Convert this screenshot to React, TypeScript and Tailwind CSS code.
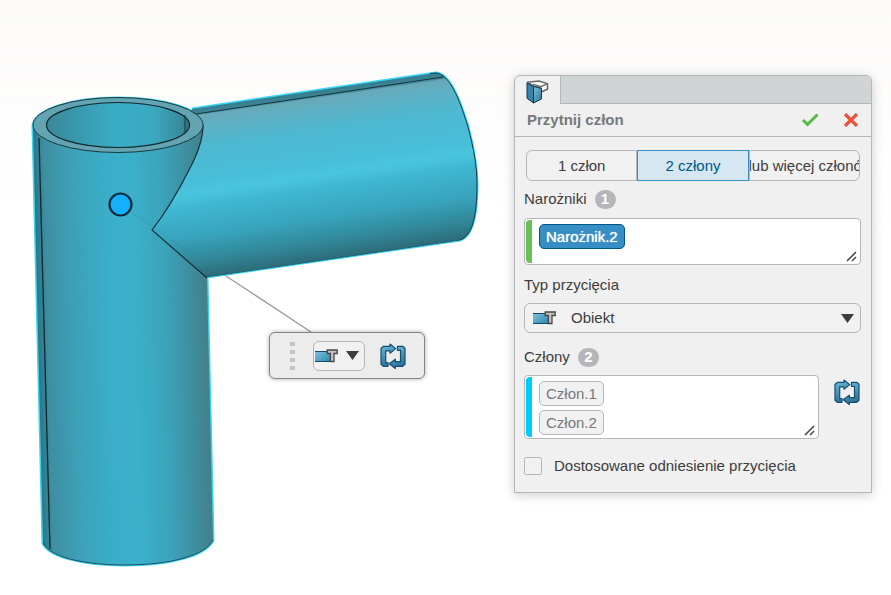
import { useState } from "react";

const corners = ["Narożnik.2"];
const members = ["Człon.1", "Człon.2"];

function TrimIcon() {
  return (
    <svg width="23" height="14" viewBox="0 0 23 14" aria-hidden="true">
      <defs>
        <linearGradient id="trim-fill" x1="0" y1="0" x2="1" y2="1">
          <stop offset="0" stopColor="#7cc3e2" />
          <stop offset="1" stopColor="#2f86ad" />
        </linearGradient>
      </defs>
      <rect x="0" y="2.5" width="15" height="10.5" fill="url(#trim-fill)" />
      <path d="M0 2.500h13M0 12.500h15" stroke="#0f4a68" />
      <path
        d="M12.200 1h10v3.500h-3.200v8h-3.600V4.500h-3.200z"
        fill="#c4c2c2"
        stroke="#4b4546"
        strokeWidth="1.300"
      />
    </svg>
  );
}

function SwapIcon() {
  return (
    <svg width="26" height="26" viewBox="0 0 26 26" aria-hidden="true">
      <defs>
        <linearGradient id="swap-fill" x1="0" y1="0" x2="0.3" y2="1">
          <stop offset="0" stopColor="#6fbfe2" />
          <stop offset="1" stopColor="#2d7298" />
        </linearGradient>
      </defs>
      <g
        fill="url(#swap-fill)"
        stroke="#14506e"
        strokeWidth="1.200"
        strokeLinejoin="round"
      >
        <path d="M3.500 3.300H10V1L15.800 5.600L10 10.200V7.900H5.700V19.500H8V23.300H3.300L1 21.300V5.500z" />
        <path d="M22.700 23.300H15.400V25.500L9.200 20.800L15.400 16.200V18.700H20.500V7.300H17.500V3.300H22.700L25 5.300V21.300z" />
      </g>
    </svg>
  );
}

function BeamIcon() {
  return (
    <svg width="23" height="24" viewBox="0 0 23 24" aria-hidden="true">
      <defs>
        <linearGradient id="beam-front" x1="0" y1="0" x2="1" y2="1">
          <stop offset="0" stopColor="#7fc0de" />
          <stop offset="1" stopColor="#2c7397" />
        </linearGradient>
      </defs>
      <g strokeLinejoin="round">
        <path
          d="M1.500 2.300L13 1l8.500 2.600v5.600L15 12V8L7.500 6z"
          fill="#f6f6f6"
          stroke="#6b6767"
          strokeWidth="1.500"
        />
        <path d="M7 4.200l8 2.400 6.500-3" fill="none" stroke="#6b6767" strokeWidth="1.200" />
        <path d="M1 2.800l6.500 3.600v16.600L1 18.300z" fill="#3983a8" stroke="#12384d" />
        <path
          d="M7.500 6.400L15.500 8.500V19L7.500 23z"
          fill="url(#beam-front)"
          stroke="#12384d"
        />
      </g>
    </svg>
  );
}

function ResizeGrip() {
  return (
    <svg
      className="absolute right-0.5 bottom-0.5"
      width="12"
      height="12"
      viewBox="0 0 12 12"
      aria-hidden="true"
    >
      <path d="M1 11l9-9M6 11l4-4" stroke="#4a4a4d" strokeWidth="1.600" />
    </svg>
  );
}

function Caret() {
  return (
    <svg width="13" height="9" viewBox="0 0 13 9" aria-hidden="true">
      <path d="M0 0h13L6.500 9z" fill="#3d3d3d" />
    </svg>
  );
}

function Count({ value }: { value: number }) {
  return (
    <span className="flex h-[19px] w-[21px] items-center justify-center rounded-full bg-[#b4b6ba] text-[15px] font-bold text-white">
      {value}
    </span>
  );
}

function Model() {
  return (
    <svg
      className="absolute top-0 left-0"
      width="891"
      height="595"
      viewBox="0 0 891 595"
      role="img"
      aria-label="Model 3D"
    >
      <defs>
        <linearGradient id="post" gradientUnits="userSpaceOnUse" x1="38" y1="340" x2="211" y2="336">
          <stop offset="0" stopColor="#28788a" />
          <stop offset="0.060" stopColor="#3e8fa1" />
          <stop offset="0.200" stopColor="#3d9fb6" />
          <stop offset="0.420" stopColor="#3aaeca" />
          <stop offset="0.560" stopColor="#3bb0ca" />
          <stop offset="0.740" stopColor="#3ba3ba" />
          <stop offset="0.900" stopColor="#3e8c9c" />
          <stop offset="1" stopColor="#467c88" />
        </linearGradient>
        <linearGradient id="arm" gradientUnits="userSpaceOnUse" x1="320" y1="89" x2="345" y2="261">
          <stop offset="0" stopColor="#347b8b" />
          <stop offset="0.040" stopColor="#3f8799" />
          <stop offset="0.050" stopColor="#68a9b9" />
          <stop offset="0.110" stopColor="#5fb0c3" />
          <stop offset="0.230" stopColor="#4eb8d1" />
          <stop offset="0.420" stopColor="#48bed9" />
          <stop offset="0.490" stopColor="#4bc5dd" />
          <stop offset="0.570" stopColor="#3fb6d1" />
          <stop offset="0.730" stopColor="#38a5be" />
          <stop offset="0.880" stopColor="#318697" />
          <stop offset="1" stopColor="#2c6470" />
        </linearGradient>
        <linearGradient id="bore" x1="0" y1="0" x2="1" y2="0">
          <stop offset="0" stopColor="#3b8798" />
          <stop offset="0.200" stopColor="#3998ac" />
          <stop offset="0.500" stopColor="#39adc7" />
          <stop offset="0.750" stopColor="#3ba8c1" />
          <stop offset="0.950" stopColor="#398899" />
          <stop offset="1" stopColor="#326f7c" />
        </linearGradient>
      </defs>

      {/* selection glow behind both pipes */}
      <g fill="none" stroke="#16d0f5" strokeWidth="3" strokeLinejoin="round" opacity="0.850">
        <path d="M192 109L436 73C449 74 459 97 468 127C474 150 477 166 477 185C477 214 473 236 460 240L206 277" />
        <path d="M203 125C203 110 165 98 118 98C71 98 33 110 33 127L43 543C49 556 80 565 125 565C172 565 206 555 213 540L207 278" />
      </g>

      <path
        d="M192 109L436 73C449 74 459 97 468 127C474 150 477 166 477 185C477 214 473 236 460 240L206 277L140 235z"
        fill="url(#arm)"
      />
      <path
        d="M430 73.500L436 73C449 74 459 97 468 127C474 150 477 166 477 185C477 214 473 236 460 240"
        fill="none"
        stroke="#123b45"
      />
      <path d="M196 114L443 77" stroke="#18343b" />
      <path d="M206 277L460 240" stroke="#28606c" />

      <path
        d="M33 127L43 543C49 556 80 565 125 565C172 565 206 555 213 540L207 278L152 230C163 216 179 190 190 168C199 151 203 138 203 125z"
        fill="url(#post)"
      />
      <path
        d="M207 278L152 230C163 216 179 190 190 168C199 151 203 138 203 125"
        fill="none"
        stroke="#122f36"
        strokeWidth="1.200"
      />
      <path d="M39 138L50 549" stroke="#10282e" strokeWidth="1.300" />
      <path d="M213 540C206 555 172 565 125 565C80 565 49 556 43 543" fill="none" stroke="#1b4f5b" />
      <ellipse cx="118" cy="125" rx="85" ry="27.500" fill="#62a4b2" stroke="#183940" />
      <ellipse cx="118" cy="125" rx="71.500" ry="22.500" fill="url(#bore)" stroke="#10282e" strokeWidth="1.200" />
      <path d="M185 115V133" stroke="#183940" />

      <path d="M129 211L226 276" stroke="#39899a" strokeWidth="1" opacity="0.350" />
      <path d="M226 276L311 332" stroke="#9c9c9c" strokeWidth="1.400" />
      <circle cx="120.500" cy="204.500" r="11" fill="#14b0fd" stroke="#082c3a" strokeWidth="2.200" />
    </svg>
  );
}

function ContextToolbar() {
  return (
    <div
      role="toolbar"
      aria-label="Przycięcie"
      className="absolute top-[332px] left-[269px] flex h-[47px] items-center rounded-md border border-[#858585] bg-[#ececec] pr-[18px] pl-5 shadow-[0_0_4px_rgba(0,0,0,0.35)]"
    >
      <div className="flex w-[5px] flex-col gap-1" aria-hidden="true">
        <span className="h-1 w-[5px] bg-[#c3c3c3]" />
        <span className="h-1 w-[5px] bg-[#c3c3c3]" />
        <span className="h-1 w-[5px] bg-[#c3c3c3]" />
        <span className="h-1 w-[5px] bg-[#c3c3c3]" />
      </div>
      <button
        type="button"
        aria-label="Typ przycięcia"
        aria-haspopup="listbox"
        className="ml-[18px] flex h-[30px] items-center gap-2 rounded-md border border-[#b4b6ba] bg-[#f1f1f1] pr-[5px] pl-px"
      >
        <TrimIcon />
        <Caret />
      </button>
      <button type="button" aria-label="Zamień człony" className="ml-[15px]">
        <SwapIcon />
      </button>
    </div>
  );
}

export default function App() {
  const [mode, setMode] = useState(2);
  const [trimType, setTrimType] = useState("Obiekt");
  const [customReference, setCustomReference] = useState(false);

  const segment =
    "flex h-[31px] min-w-0 flex-1 items-center justify-center overflow-hidden border whitespace-nowrap";
  const idle = "border-[#b4b6ba] bg-[#f1f1f1]";
  const active = "border-[#368ec4] bg-[#d5e8f2] text-[#005686]";

  return (
    <div className="relative flex min-h-screen items-start justify-end overflow-hidden bg-linear-to-b from-[#fcfbfa] to-white to-40% pt-[75px] pr-[19px] font-['Liberation_Sans',Arial,sans-serif] text-[15px] leading-5 text-[#3d3d3d]">
      <Model />
      <ContextToolbar />

      <section className="relative w-[358px] rounded-t-md border border-[#b4b6ba] bg-[#f0f0f0] shadow-[0_2px_12px_rgba(0,0,0,0.2)]">
        <div className="flex h-7 rounded-t-md bg-[#d1d4d4]">
          <div className="flex w-[46px] shrink-0 items-center justify-center rounded-tl-md border-r border-[#b4b6ba] bg-[#f0f0f0] pt-1">
            <BeamIcon />
          </div>
          <div className="flex-1 border-b border-[#b4b6ba]" />
        </div>

        <header className="flex h-[33px] items-center border-b border-[#b4b6ba] px-3">
          <h1 className="flex-1 font-bold text-[#77797c]">Przytnij człon</h1>
          <button type="button" aria-label="OK">
            <svg width="18" height="14" viewBox="0 0 18 14" aria-hidden="true">
              <path d="M2 7l4.500 4.500L16.500 1.500" fill="none" stroke="#57b847" strokeWidth="3" />
            </svg>
          </button>
          <button type="button" aria-label="Anuluj" className="ml-6">
            <svg width="16" height="14" viewBox="0 0 16 14" aria-hidden="true">
              <path d="M2 1l12 12M14 1L2 13" stroke="#ea4f37" strokeWidth="3.200" />
            </svg>
          </button>
        </header>

        <div className="pt-[13px] pr-[10px] pb-4 pl-[9px]">
          <div role="group" aria-label="Liczba członów" className="mr-px ml-0.5 flex">
            <button
              type="button"
              aria-pressed={mode === 1}
              onClick={() => setMode(1)}
              className={`${segment} rounded-l-md ${mode === 1 ? active : idle}`}
            >
              1 człon
            </button>
            <button
              type="button"
              aria-pressed={mode === 2}
              onClick={() => setMode(2)}
              className={`${segment} ${mode === 2 ? active : idle}`}
            >
              2 człony
            </button>
            <button
              type="button"
              aria-pressed={mode === 3}
              onClick={() => setMode(3)}
              className={`${segment} rounded-r-md ${mode === 3 ? active : idle}`}
            >
              3 lub więcej członów
            </button>
          </div>

          <div className="mt-2 flex items-center gap-2">
            <span id="corners-label">Narożniki</span>
            <Count value={corners.length} />
          </div>
          <div
            role="group"
            aria-labelledby="corners-label"
            className="relative mt-[9px] flex h-[47px] rounded-sm border border-[#b4b6ba] bg-white p-px"
          >
            <span className="w-1.5 rounded-l-sm bg-[#6abf58]" />
            <div className="flex flex-col items-start gap-1 pt-1 pl-[7px]">
              {corners.map((name) => (
                <button
                  key={name}
                  type="button"
                  className="h-[25px] rounded-[5px] border border-[#005686] bg-[#368ec4] px-1.5 pt-px text-white text-shadow-[0_0_1px_#fff]"
                >
                  {name}
                </button>
              ))}
            </div>
            <ResizeGrip />
          </div>

          <label htmlFor="trim-type" className="mt-[10px] block">
            Typ przycięcia
          </label>
          <div className="relative mt-2">
            <select
              id="trim-type"
              value={trimType}
              onChange={(event) => setTrimType(event.target.value)}
              className="h-[30px] w-full appearance-none rounded-md border border-[#b4b6ba] bg-[#f1f1f1] pl-[46px]"
            >
              <option>Obiekt</option>
            </select>
            <span className="pointer-events-none absolute inset-0 flex items-center justify-between pr-[7px] pl-[9px]">
              <TrimIcon />
              <Caret />
            </span>
          </div>

          <div className="mt-[14px] flex items-center gap-2">
            <span id="members-label">Człony</span>
            <Count value={members.length} />
          </div>
          <div className="mt-2 flex items-start">
            <div
              role="group"
              aria-labelledby="members-label"
              className="relative flex h-16 flex-1 rounded-sm border border-[#b4b6ba] bg-white p-px"
            >
              <span className="w-1.5 rounded-l-sm bg-[#00cbfe]" />
              <div className="flex flex-col items-start gap-1 pt-1 pl-[7px]">
                {members.map((name) => (
                  <button
                    key={name}
                    type="button"
                    className="h-[25px] rounded-[5px] border border-[#b4b6ba] bg-[#f1f1f1] px-1.5 pt-px text-[#77797c]"
                  >
                    {name}
                  </button>
                ))}
              </div>
              <ResizeGrip />
            </div>
            <button type="button" aria-label="Zamień człony" className="mt-1 mr-px ml-[15px]">
              <SwapIcon />
            </button>
          </div>

          <label className="mt-[17px] flex items-center gap-3">
            <input
              type="checkbox"
              checked={customReference}
              onChange={(event) => setCustomReference(event.target.checked)}
              className="size-[18px] appearance-none rounded-xs border border-[#b4b6ba] bg-[#f1f1f1] checked:bg-[#368ec4]"
            />
            Dostosowane odniesienie przycięcia
          </label>
        </div>
      </section>
    </div>
  );
}
